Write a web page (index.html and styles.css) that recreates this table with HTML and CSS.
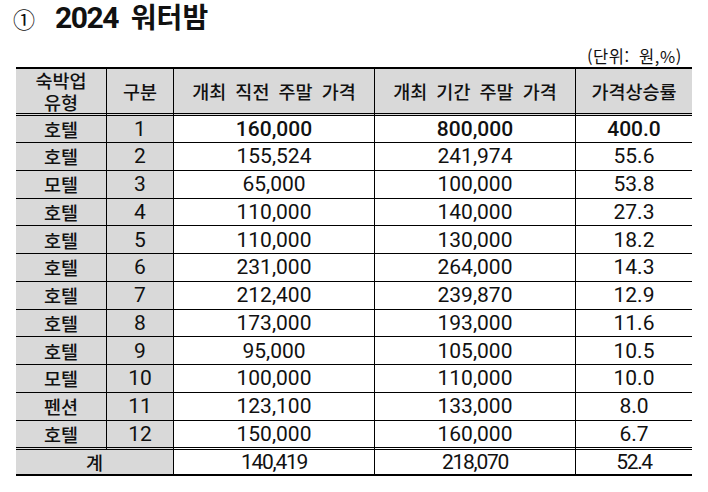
FILE: index.html
```html
<!DOCTYPE html>
<html lang="ko">
<head>
<meta charset="utf-8">
<title>2024 워터밤</title>
<link rel="stylesheet" href="styles.css">
</head>
<body>
<h1 class="title"><span class="circ">①</span><span class="year">2024</span><span class="name">워터밤</span></h1>
<div class="unit">(단위: 원,%)</div>
<div class="tbl">
  <div class="c h kr">숙박업<br>유형</div>
  <div class="c h kr">구분</div>
  <div class="c h kr wide">개최 직전 주말 가격</div>
  <div class="c h kr wide">개최 기간 주말 가격</div>
  <div class="c h kr last">가격상승률</div>

  <div class="c g kr">호텔</div><div class="c g num">1</div><div class="c num b">160,000</div><div class="c num b">800,000</div><div class="c num b last">400.0</div>
  <div class="c g kr">호텔</div><div class="c g num">2</div><div class="c num">155,524</div><div class="c num">241,974</div><div class="c num last">55.6</div>
  <div class="c g kr">모텔</div><div class="c g num">3</div><div class="c num">65,000</div><div class="c num">100,000</div><div class="c num last">53.8</div>
  <div class="c g kr">호텔</div><div class="c g num">4</div><div class="c num">110,000</div><div class="c num">140,000</div><div class="c num last">27.3</div>
  <div class="c g kr">호텔</div><div class="c g num">5</div><div class="c num">110,000</div><div class="c num">130,000</div><div class="c num last">18.2</div>
  <div class="c g kr">호텔</div><div class="c g num">6</div><div class="c num">231,000</div><div class="c num">264,000</div><div class="c num last">14.3</div>
  <div class="c g kr">호텔</div><div class="c g num">7</div><div class="c num">212,400</div><div class="c num">239,870</div><div class="c num last">12.9</div>
  <div class="c g kr">호텔</div><div class="c g num">8</div><div class="c num">173,000</div><div class="c num">193,000</div><div class="c num last">11.6</div>
  <div class="c g kr">호텔</div><div class="c g num">9</div><div class="c num">95,000</div><div class="c num">105,000</div><div class="c num last">10.5</div>
  <div class="c g kr">모텔</div><div class="c g num">10</div><div class="c num">100,000</div><div class="c num">110,000</div><div class="c num last">10.0</div>
  <div class="c g kr">펜션</div><div class="c g num">11</div><div class="c num">123,100</div><div class="c num">133,000</div><div class="c num last">8.0</div>
  <div class="c g kr r12">호텔</div><div class="c g num r12">12</div><div class="c num r12">150,000</div><div class="c num r12">160,000</div><div class="c num r12 last">6.7</div>

  <div class="c g kr tot span2">계</div><div class="c num tot tight">140,419</div><div class="c num tot tight">218,070</div><div class="c num tot tight last">52.4</div>
</div>
</body>
</html>
```
FILE: styles.css
```css
html, body {
  margin: 0;
  padding: 0;
  background: #fff;
  color: #111;
}
body {
  padding: 0 16px;
  font-family: "Noto Sans CJK KR", sans-serif;
}
.title {
  margin: 0;
  height: 46px;
  line-height: 32px;
  font-size: 27px;
  font-weight: 700;
  display: flex;
  align-items: baseline;
}
.circ {
  font-family: "Noto Sans CJK KR", sans-serif;
  font-weight: 400;
  font-size: 22px;
  margin-left: -3px;
  width: 42px;
}
.year {
  font-family: Roboto, "Liberation Sans", sans-serif;
  font-weight: 700;
  font-size: 30px;
  letter-spacing: -1.5px;
  margin-right: 13px;
}
.name {
  font-family: "Noto Sans CJK KR", sans-serif;
  font-weight: 700;
  font-size: 28px;
}
.unit {
  height: 21px;
  line-height: 20px;
  font-size: 16.5px;
  letter-spacing: 0.6px;
  word-spacing: 4px;
  text-align: right;
  padding-right: 10px;
}
.tbl {
  display: grid;
  grid-template-columns: 91px 67px 201px 201px 116px;
  grid-template-rows: 49px 27px repeat(10, 27.75px) 29.75px 26px;
}
.c {
  box-sizing: border-box;
  border-right: 1px solid #000;
  border-bottom: 1px solid #000;
  display: flex;
  align-items: center;
  justify-content: center;
  text-align: center;
  background: #fff;
  white-space: nowrap;
}
.c.last {
  border-right: none;
}
.h {
  background: #d9d9d9;
  border-top: 2px solid #000;
  border-bottom: 3px double #000;
}
.g {
  background: #d9d9d9;
}
.kr {
  font-family: "Noto Sans CJK KR", sans-serif;
  font-size: 18.5px;
  font-weight: 500;
  line-height: 22px;
}
.wide {
  word-spacing: 4px;
}
.num {
  font-family: Roboto, "Liberation Sans", sans-serif;
  font-size: 21px;
  line-height: 24px;
}
.num.b {
  font-weight: 500;
}
.r12 {
  border-bottom: 3px double #000;
}
.tot {
  border-bottom: 2px solid #000;
}
.span2 {
  grid-column: span 2;
}
.tight {
  letter-spacing: -1.3px;
}
```
